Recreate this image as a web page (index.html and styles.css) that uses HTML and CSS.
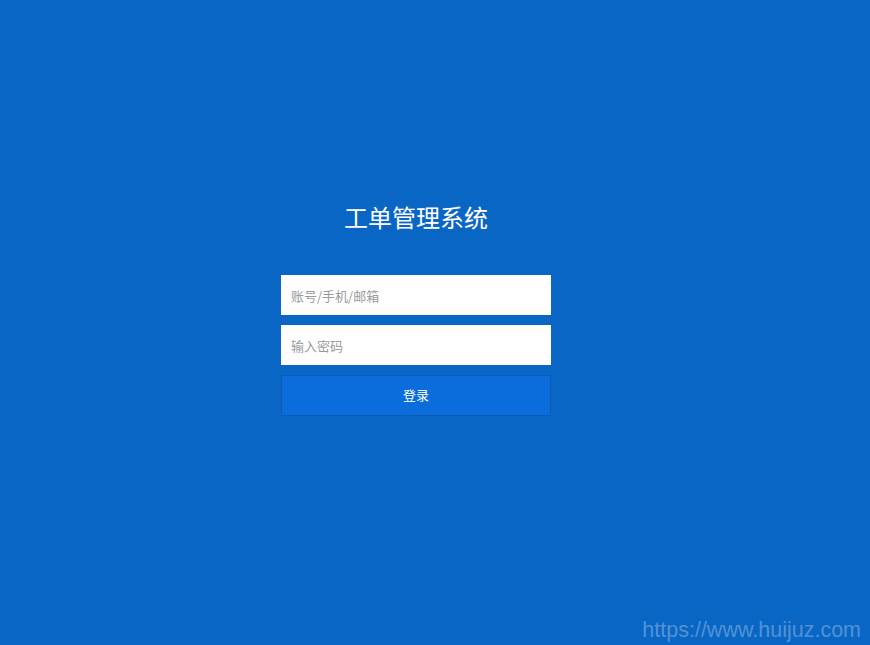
FILE: index.html
```html
<!DOCTYPE html>
<html lang="zh-CN">
<head>
<meta charset="utf-8">
<title>工单管理系统</title>
<link rel="stylesheet" href="styles.css">
</head>
<body>
<main class="page">
  <div class="login">
    <h1 class="title">工单管理系统</h1>
    <form class="form">
      <input class="field" type="text" placeholder="账号/手机/邮箱">
      <input class="field" type="password" placeholder="输入密码">
      <button class="submit" type="button">登录</button>
    </form>
  </div>
  <div class="watermark">https://www.huijuz.com</div>
</main>
</body>
</html>
```
FILE: styles.css
```css
html, body {
  margin: 0;
  padding: 0;
  height: 100%;
}
body {
  background: #0a66c4;
  font-family: "Noto Sans CJK SC", "Liberation Sans", sans-serif;
}
.page {
  box-sizing: border-box;
  height: 645px;
  padding-right: 38px;
  display: flex;
  flex-direction: column;
  align-items: center;
  position: relative;
}
.login {
  margin-top: 199px;
  width: 270px;
  display: flex;
  flex-direction: column;
  align-items: center;
}
.title {
  margin: 0;
  font-size: 24px;
  font-weight: normal;
  color: #ffffff;
  line-height: 36px;
}
.form {
  margin-top: 40px;
  width: 270px;
  display: flex;
  flex-direction: column;
}
.field {
  box-sizing: border-box;
  width: 270px;
  height: 40px;
  border: none;
  outline: none;
  padding: 0 10px;
  margin: 0 0 10px 0;
  font-family: "Noto Sans CJK SC", "Liberation Sans", sans-serif;
  font-size: 13px;
  color: #333;
  background: #ffffff;
}
.field::placeholder {
  color: #9a9a9a;
}
.submit {
  box-sizing: border-box;
  width: 270px;
  height: 41px;
  padding-bottom: 3px;
  border: 1px solid #0a5cb4;
  background: #0b6ddb;
  color: #ffffff;
  font-family: "Noto Sans CJK SC", "Liberation Sans", sans-serif;
  font-size: 13px;
  cursor: pointer;
}
.watermark {
  position: absolute;
  right: 9px;
  bottom: 2px;
  font-family: "Liberation Sans", sans-serif;
  font-size: 21.5px;
  color: rgba(255, 255, 255, 0.3);
}
```
